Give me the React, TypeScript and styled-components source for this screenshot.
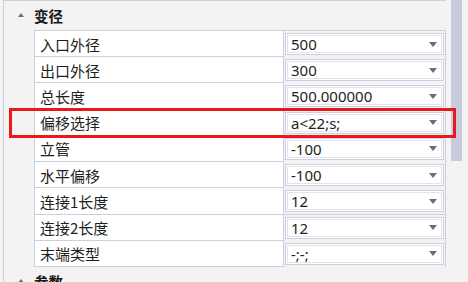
import styled, { createGlobalStyle } from 'styled-components'

const GlobalStyle = createGlobalStyle`
	html, body {
		margin: 0;
		padding: 0;
		background: #f3f3f3;
		overflow: hidden;
	}
	body {
		font-family: "Noto Sans CJK SC", "Noto Sans", sans-serif;
		color: #1e1e1e;
	}
`

const LINE = '#cdcee0'

const Panel = styled.div`
	display: flex;
	align-items: flex-start;
	width: 468px;
	height: 282px;
	overflow: hidden;
	background: #f3f3f3;
`

const Grid = styled.div`
	flex: none;
	width: 442px;
	margin-left: 3px;
	min-height: 282px;
	border-left: 1px solid ${LINE};
	border-top: 1px solid ${LINE};
`

const SectionHeader = styled.div`
	height: 29px;
	display: flex;
	align-items: center;
	gap: 10px;
	padding-left: 14px;
	font-size: 14.5px;
	font-weight: bold;
	color: #1a1a1a;
`

const Caret = styled.span`
	width: 0;
	height: 0;
	border-left: 3px solid transparent;
	border-right: 3px solid transparent;
	border-bottom: 4px solid #707070;
	margin-top: -1px;
`

const Rows = styled.div`
	margin-left: 30px;
	border-top: 1px solid ${LINE};
	border-left: 1px solid ${LINE};
	border-right: 1px solid ${LINE};
`

const Row = styled.div`
	position: relative;
	display: grid;
	grid-template-columns: 249px 1fr;
	height: 26.22px;
	box-sizing: border-box;
	border-bottom: 1px solid ${LINE};
	background: #fff;
`

const Label = styled.div`
	display: flex;
	align-items: center;
	padding-left: 5px;
	font-size: 15px;
	border-right: 1px solid ${LINE};
	white-space: nowrap;
`

const ValueCell = styled.div`
	padding: 2px 1px;
	background: #f3f3f3;
	display: flex;
`

const ValueBox = styled.div`
	flex: 1;
	display: flex;
	align-items: center;
	justify-content: space-between;
	padding: 0 6px 0 5px;
	background: #fff;
	border: 1px solid ${LINE};
	box-shadow: inset 0 0 0 1px #fff, inset 0 0 0 2px #e3e3ee;
	font-family: "Noto Sans", "Noto Sans CJK SC", sans-serif;
	font-size: 15px;
	color: #1e1e1e;
`

const Arrow = styled.span`
	width: 0;
	height: 0;
	border-left: 4px solid transparent;
	border-right: 4px solid transparent;
	border-top: 5px solid #6e6e6e;
`

const Highlight = styled.div`
	position: absolute;
	left: -26px;
	right: -11px;
	top: -2px;
	bottom: -3px;
	border: 3px solid #e8181c;
	pointer-events: none;
	z-index: 2;
`

const ScrollTrack = styled.div`
	flex: none;
	width: 22px;
	height: 282px;
	background: #f3f3f3;
`

const ScrollThumb = styled.div`
	margin-left: 5px;
	width: 11px;
	height: 161px;
	background: #c9cadb;
`

const rows = [
	{ label: '入口外径', value: '500' },
	{ label: '出口外径', value: '300' },
	{ label: '总长度', value: '500.000000' },
	{ label: '偏移选择', value: 'a<22;s;', highlight: true },
	{ label: '立管', value: '-100' },
	{ label: '水平偏移', value: '-100' },
	{ label: '连接1长度', value: '12' },
	{ label: '连接2长度', value: '12' },
	{ label: '末端类型', value: '-;-;' },
]

export default function App() {
	return (
		<Panel>
			<GlobalStyle />
			<Grid>
				<SectionHeader>
					<Caret />
					变径
				</SectionHeader>
				<Rows>
					{rows.map((r) => (
						<Row key={r.label}>
							<Label>{r.label}</Label>
							<ValueCell>
								<ValueBox>
									<span>{r.value}</span>
									<Arrow />
								</ValueBox>
							</ValueCell>
							{r.highlight && <Highlight />}
						</Row>
					))}
				</Rows>
				<SectionHeader>
					<Caret />
					参数
				</SectionHeader>
			</Grid>
			<ScrollTrack>
				<ScrollThumb />
			</ScrollTrack>
		</Panel>
	)
}
